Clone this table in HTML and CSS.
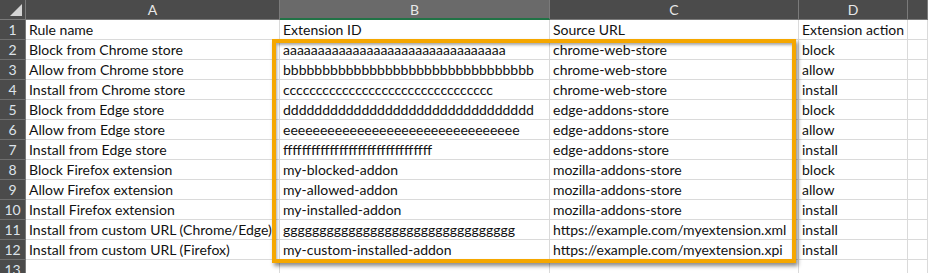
FILE: index.html
```html
<!DOCTYPE html>
<html>
<head>
<meta charset="utf-8">
<link rel="stylesheet" href="styles.css">
</head>
<body>
<div class="wrap">
  <div class="sheet">
    <div class="ch corner"><span class="tri"></span></div>
    <div class="ch">A</div>
    <div class="ch sel">B</div>
    <div class="ch">C</div>
    <div class="ch">D</div>
    <div class="ch"></div>

    <div class="rh">1</div><div class="c">Rule name</div><div class="c">Extension ID</div><div class="c">Source URL</div><div class="c">Extension action</div><div class="c"></div>
    <div class="rh">2</div><div class="c">Block from Chrome store</div><div class="c">aaaaaaaaaaaaaaaaaaaaaaaaaaaaaaaa</div><div class="c">chrome-web-store</div><div class="c">block</div><div class="c"></div>
    <div class="rh">3</div><div class="c">Allow from Chrome store</div><div class="c">bbbbbbbbbbbbbbbbbbbbbbbbbbbbbbbb</div><div class="c">chrome-web-store</div><div class="c">allow</div><div class="c"></div>
    <div class="rh">4</div><div class="c">Install from Chrome store</div><div class="c">cccccccccccccccccccccccccccccccc</div><div class="c">chrome-web-store</div><div class="c">install</div><div class="c"></div>
    <div class="rh">5</div><div class="c">Block from Edge store</div><div class="c">dddddddddddddddddddddddddddddddd</div><div class="c">edge-addons-store</div><div class="c">block</div><div class="c"></div>
    <div class="rh">6</div><div class="c">Allow from Edge store</div><div class="c">eeeeeeeeeeeeeeeeeeeeeeeeeeeeeeee</div><div class="c">edge-addons-store</div><div class="c">allow</div><div class="c"></div>
    <div class="rh">7</div><div class="c">Install from Edge store</div><div class="c">ffffffffffffffffffffffffffffffff</div><div class="c">edge-addons-store</div><div class="c">install</div><div class="c"></div>
    <div class="rh">8</div><div class="c">Block Firefox extension</div><div class="c">my-blocked-addon</div><div class="c">mozilla-addons-store</div><div class="c">block</div><div class="c"></div>
    <div class="rh">9</div><div class="c">Allow Firefox extension</div><div class="c">my-allowed-addon</div><div class="c">mozilla-addons-store</div><div class="c">allow</div><div class="c"></div>
    <div class="rh">10</div><div class="c">Install Firefox extension</div><div class="c">my-installed-addon</div><div class="c">mozilla-addons-store</div><div class="c">install</div><div class="c"></div>
    <div class="rh">11</div><div class="c">Install from custom URL (Chrome/Edge)</div><div class="c">gggggggggggggggggggggggggggggggg</div><div class="c">https://example.com/myextension.xml</div><div class="c">install</div><div class="c"></div>
    <div class="rh">12</div><div class="c">Install from custom URL (Firefox)</div><div class="c">my-custom-installed-addon</div><div class="c">https://example.com/myextension.xpi</div><div class="c">install</div><div class="c"></div>
    <div class="rh">13</div><div class="c"></div><div class="c"></div><div class="c"></div><div class="c"></div><div class="c"></div>
  </div>
  <div class="highlight"></div>
</div>
</body>
</html>
```
FILE: styles.css
```css
html, body {
  margin: 0;
  padding: 0;
  background: #ffffff;
}

.wrap {
  position: relative;
  width: 928px;
  height: 273px;
  overflow: hidden;
}

.sheet {
  display: grid;
  grid-template-columns: 26px 254px 270px 249px 109px 1fr;
  grid-auto-rows: 20px;
  font-family: Lato, "Liberation Sans", sans-serif;
}

.ch {
  background: #4b4b4b;
  color: #e8e8e8;
  font-size: 14px;
  line-height: 19px;
  text-align: center;
  border-right: 1px solid #7a7a7a;
  border-bottom: 1px solid #7a7a7a;
  box-sizing: border-box;
}

.ch.sel {
  background: #6a6a6a;
  border-bottom: 2px solid #217346;
}

.corner {
  position: relative;
}

.tri {
  position: absolute;
  right: 3px;
  bottom: 3px;
  width: 0;
  height: 0;
  border-left: 12px solid transparent;
  border-bottom: 12px solid #d4d4d4;
}

.rh {
  background: #4b4b4b;
  color: #dde3ea;
  font-size: 14px;
  line-height: 19px;
  text-align: center;
  border-right: 1px solid #7a7a7a;
  border-bottom: 1px solid #6e6e6e;
  box-sizing: border-box;
}

.c {
  color: #111111;
  font-size: 14px;
  line-height: 19px;
  padding-left: 3px;
  white-space: nowrap;
  overflow: hidden;
  border-right: 1px solid #dadada;
  border-bottom: 1px solid #dadada;
  box-sizing: border-box;
}

.highlight {
  position: absolute;
  left: 272px;
  top: 39px;
  width: 524px;
  height: 224px;
  box-sizing: border-box;
  border: 4px solid #f5a700;
  box-shadow: 2px 3px 4px rgba(0, 0, 0, 0.45), inset 1px 2px 3px rgba(0, 0, 0, 0.35);
  pointer-events: none;
}
```
